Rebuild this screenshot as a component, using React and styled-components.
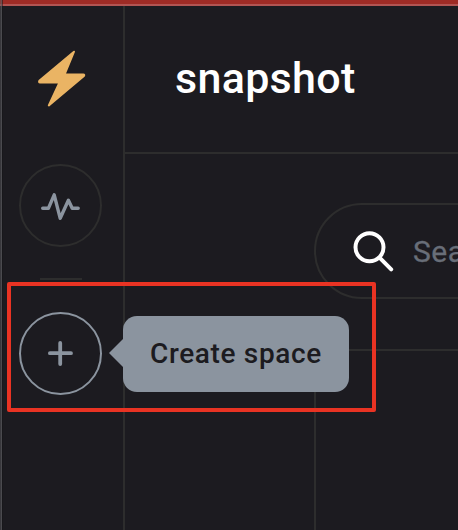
import React from "react";
import styled, { createGlobalStyle } from "styled-components";

const line = "#2d2d2d";
const slate = "#8b949f";

const GlobalStyle = createGlobalStyle`
  * { box-sizing: border-box; }
  body { margin: 0; background: #1c1b20; font-family: Roboto, "Liberation Sans", sans-serif; overflow: hidden; }
`;

const Window = styled.div`
  position: relative;
  display: flex;
  flex-direction: column;
  width: 458px;
  height: 530px;
  overflow: hidden;
  background: #1c1b20;
`;

const TopBar = styled.div`
  flex: none;
  height: 6px;
  background: #9e2b25;
  border-bottom: 2px solid #b25452;
`;

const Body = styled.div`
  flex: 1;
  display: flex;
  min-height: 0;
`;

const WindowEdge = styled.div`
  position: absolute;
  left: 0;
  top: 0;
  bottom: 0;
  width: 3px;
  background: linear-gradient(90deg, rgba(90, 90, 94, 0.45) 1px, rgba(90, 90, 94, 0.75) 1px 2px, rgba(20, 20, 22, 0.5) 2px);
`;

const Sidebar = styled.aside`
  flex: none;
  width: 125px;
  border-right: 2px solid ${line};
  padding: 44px 0 0 19px;
`;

const Logo = styled.svg`
  display: block;
  width: 51px;
  height: 60px;
  margin: -2px 0 56px 17px;
`;

const RoundButton = styled.button`
  position: relative;
  display: flex;
  align-items: center;
  justify-content: center;
  width: 83px;
  height: 83px;
  padding: 0;
  border-radius: 50%;
  background: transparent;
  border: ${({ $active }) => ($active ? `2px solid ${slate}` : `2px solid ${line}`)};
  color: ${slate};
`;

const Divider = styled.div`
  width: 42px;
  height: 2px;
  margin: 31px 0 32px 21px;
  background: ${line};
`;

const Tooltip = styled.div`
  position: absolute;
  left: 102px;
  top: 2px;
  width: 226px;
  height: 76px;
  display: flex;
  align-items: center;
  padding-left: 27px;
  border-radius: 14px;
  background: ${slate};
  color: #1c1b20;
  font: 500 28px/76px Roboto, sans-serif;
  letter-spacing: 0.65px;
  white-space: nowrap;
  z-index: 1;

  &::before {
    content: "";
    position: absolute;
    left: -14px;
    top: 22px;
    border: solid transparent;
    border-width: 15px 15px 15px 0;
    border-right-color: ${slate};
  }
`;

const Main = styled.main`
  flex: 1;
  min-width: 0;
`;

const Header = styled.header`
  height: 148px;
  border-bottom: 2px solid ${line};
  padding-left: 50px;
`;

const Title = styled.h1`
  margin: 0;
  color: #fff;
  font: 500 43px/145px Roboto, sans-serif;
  letter-spacing: 0.3px;
`;

const Search = styled.div`
  display: flex;
  align-items: center;
  width: 600px;
  height: 96px;
  margin: 49px 0 0 189px;
  padding-left: 37px;
  border: 2px solid ${line};
  border-radius: 48px;
  color: #686e78;
  font: 400 30px/92px Roboto, sans-serif;
  letter-spacing: 0.5px;
`;

const Placeholder = styled.span`
  padding-top: 2px;
  -webkit-text-stroke: 0.3px currentColor;
`;

const SearchIcon = styled.svg`
  flex: none;
  width: 42px;
  height: 42px;
  margin-right: 18px;
`;

const Card = styled.section`
  width: 600px;
  height: 300px;
  margin: 50px 0 0 189px;
  border: 2px solid ${line};
`;

const Highlight = styled.div`
  position: absolute;
  left: 7px;
  top: 282px;
  width: 369px;
  height: 130px;
  border: 4px solid #e93323;
  border-radius: 2px;
  z-index: 2;
  pointer-events: none;
`;

export default function App() {
  return (
    <Window>
      <GlobalStyle />
      <TopBar />
      <Body>
        <Sidebar>
          <Logo viewBox="36 48 51 60">
            <path
              d="M74 51.7 39.3 80.8 Q38.6 82.4 40 82.4 H59.5 L48.8 105.4 L83.9 76 Q84.8 74.4 83.3 74.4 H64.6 Z"
              fill="#eab464" stroke="#eab464" strokeWidth="2" strokeLinejoin="round"
            />
          </Logo>
          <RoundButton aria-label="Activity">
            <svg width="40" height="30" viewBox="0.8 0.2 40 30" fill="none" stroke="currentColor" strokeWidth="3.4" strokeLinecap="round" strokeLinejoin="round">
              <path d="M2.5 17.5H8.2L14 4 20 27.5 28.2 9.5 32 17.5H38" />
            </svg>
          </RoundButton>
          <Divider />
          <RoundButton $active aria-label="Create space">
            <svg width="26" height="26" viewBox="0.8 0.8 26 26" stroke="currentColor" strokeWidth="3.8" strokeLinecap="round">
              <path d="M2.7 13H23.8M13 2.7V23.8" />
            </svg>
            <Tooltip>Create space</Tooltip>
          </RoundButton>
        </Sidebar>
        <Main>
          <Header>
            <Title>snapshot</Title>
          </Header>
          <Search>
            <SearchIcon viewBox="353 230 42 42" fill="none" stroke="#fff" strokeWidth="4" strokeLinecap="round">
              <circle cx="369.5" cy="247.3" r="14" />
              <path d="M379.8 257.8 391.2 269.3" />
            </SearchIcon>
            <Placeholder>Search</Placeholder>
          </Search>
          <Card />
        </Main>
      </Body>
      <WindowEdge />
      <Highlight />
    </Window>
  );
}
